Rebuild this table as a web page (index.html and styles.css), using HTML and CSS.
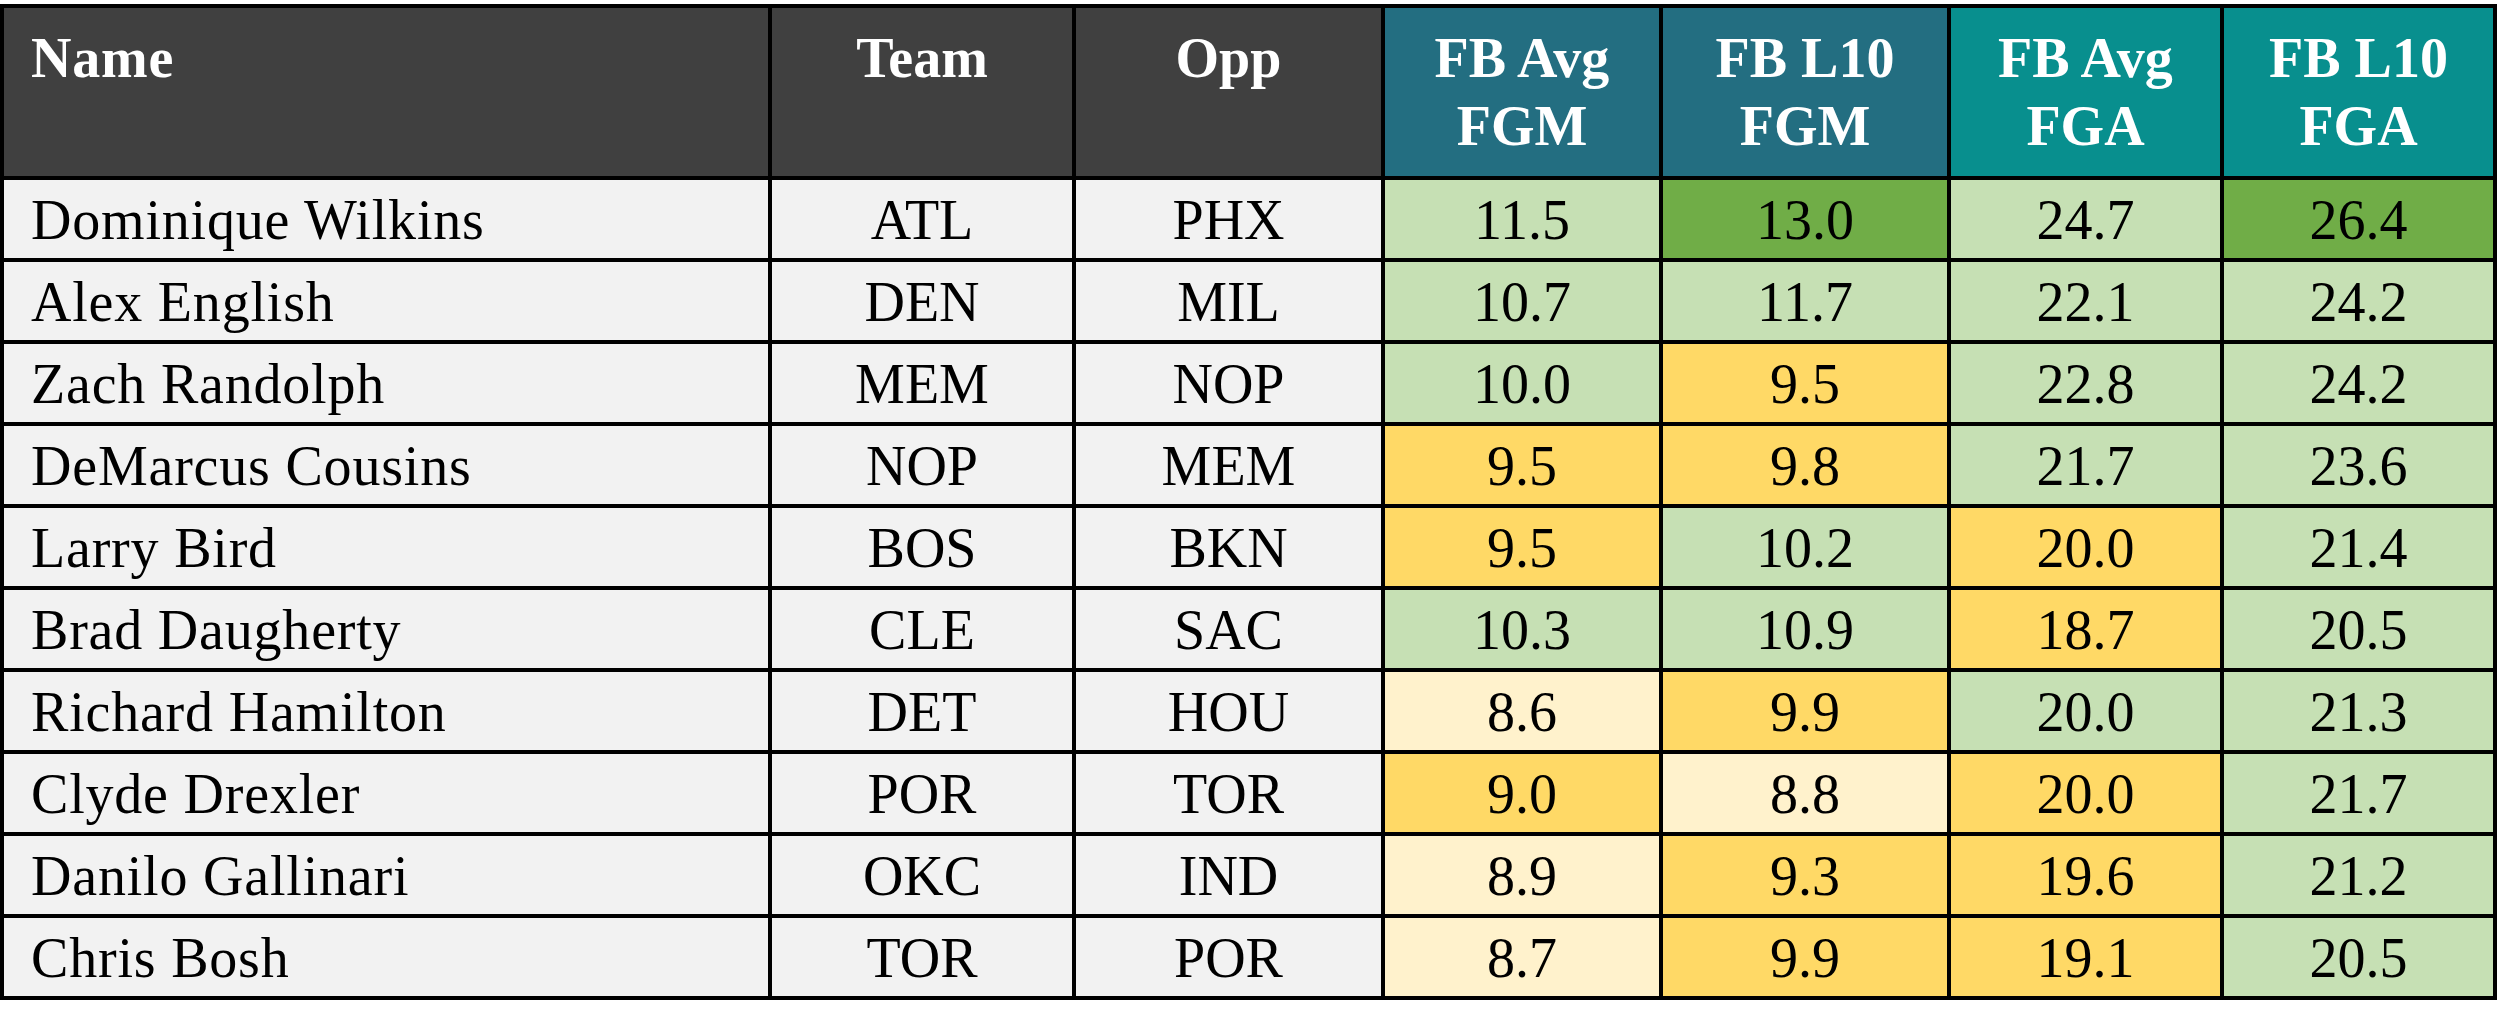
FILE: index.html
```html
<!DOCTYPE html>
<html lang="en">
<head>
<meta charset="utf-8">
<title>FB FGM / FGA</title>
<link rel="stylesheet" href="styles.css">
</head>
<body>
<div class="sheet">
  <div class="row head">
    <div class="cell hd name">Name</div>
    <div class="cell hd mid">Team</div>
    <div class="cell hd mid">Opp</div>
    <div class="cell hd fgm">FB Avg<br>FGM</div>
    <div class="cell hd fgm">FB L10<br>FGM</div>
    <div class="cell hd fga">FB Avg<br>FGA</div>
    <div class="cell hd fga">FB L10<br>FGA</div>
  </div>
  <div class="row">
    <div class="cell txt name">Dominique Wilkins</div><div class="cell txt">ATL</div><div class="cell txt">PHX</div>
    <div class="cell num lg">11.5</div><div class="cell num dg">13.0</div><div class="cell num lg">24.7</div><div class="cell num dg">26.4</div>
  </div>
  <div class="row">
    <div class="cell txt name">Alex English</div><div class="cell txt">DEN</div><div class="cell txt">MIL</div>
    <div class="cell num lg">10.7</div><div class="cell num lg">11.7</div><div class="cell num lg">22.1</div><div class="cell num lg">24.2</div>
  </div>
  <div class="row">
    <div class="cell txt name">Zach Randolph</div><div class="cell txt">MEM</div><div class="cell txt">NOP</div>
    <div class="cell num lg">10.0</div><div class="cell num yl">9.5</div><div class="cell num lg">22.8</div><div class="cell num lg">24.2</div>
  </div>
  <div class="row">
    <div class="cell txt name">DeMarcus Cousins</div><div class="cell txt">NOP</div><div class="cell txt">MEM</div>
    <div class="cell num yl">9.5</div><div class="cell num yl">9.8</div><div class="cell num lg">21.7</div><div class="cell num lg">23.6</div>
  </div>
  <div class="row">
    <div class="cell txt name">Larry Bird</div><div class="cell txt">BOS</div><div class="cell txt">BKN</div>
    <div class="cell num yl">9.5</div><div class="cell num lg">10.2</div><div class="cell num yl">20.0</div><div class="cell num lg">21.4</div>
  </div>
  <div class="row">
    <div class="cell txt name">Brad Daugherty</div><div class="cell txt">CLE</div><div class="cell txt">SAC</div>
    <div class="cell num lg">10.3</div><div class="cell num lg">10.9</div><div class="cell num yl">18.7</div><div class="cell num lg">20.5</div>
  </div>
  <div class="row">
    <div class="cell txt name">Richard Hamilton</div><div class="cell txt">DET</div><div class="cell txt">HOU</div>
    <div class="cell num ly">8.6</div><div class="cell num yl">9.9</div><div class="cell num lg">20.0</div><div class="cell num lg">21.3</div>
  </div>
  <div class="row">
    <div class="cell txt name">Clyde Drexler</div><div class="cell txt">POR</div><div class="cell txt">TOR</div>
    <div class="cell num yl">9.0</div><div class="cell num ly">8.8</div><div class="cell num yl">20.0</div><div class="cell num lg">21.7</div>
  </div>
  <div class="row">
    <div class="cell txt name">Danilo Gallinari</div><div class="cell txt">OKC</div><div class="cell txt">IND</div>
    <div class="cell num ly">8.9</div><div class="cell num yl">9.3</div><div class="cell num yl">19.6</div><div class="cell num lg">21.2</div>
  </div>
  <div class="row">
    <div class="cell txt name">Chris Bosh</div><div class="cell txt">TOR</div><div class="cell txt">POR</div>
    <div class="cell num ly">8.7</div><div class="cell num yl">9.9</div><div class="cell num yl">19.1</div><div class="cell num lg">20.5</div>
  </div>
</div>
</body>
</html>
```

FILE: styles.css
```css
html, body {
  margin: 0;
  padding: 0;
  background: #ffffff;
}

body {
  font-family: "Liberation Serif", "Times New Roman", serif;
  color: #000;
}

.sheet {
  margin-top: 4px;
  width: 2497px;
  box-sizing: border-box;
  display: grid;
  grid-template-columns: 764px 300px 305px 274px 284px 269px 269px;
  grid-template-rows: 168px repeat(10, 78px);
  gap: 4px;
  padding: 4px;
  background: #000;
}

.row {
  display: contents;
}

.cell {
  font-size: 56px;
  display: flex;
  align-items: center;
  justify-content: center;
  text-align: center;
  white-space: nowrap;
}

.cell.name {
  justify-content: flex-start;
  text-align: left;
  padding-left: 27px;
  letter-spacing: 0.8px;
}

.hd {
  align-items: flex-start;
  padding-top: 16px;
  box-sizing: border-box;
  line-height: 68px;
  font-weight: bold;
  color: #ffffff;
  background: #404040;
}

.hd.fgm {
  background: #236e81;
}

.hd.fga {
  background: #088f8e;
}

.txt {
  background: #f2f2f2;
  line-height: 64px;
  padding-top: 2px;
  box-sizing: border-box;
}

.num {
  line-height: 64px;
  padding-top: 2px;
  box-sizing: border-box;
}

.lg { background: #c6e0b4; }
.dg { background: #70ad47; }
.yl { background: #ffd966; }
.ly { background: #fff2cc; }
```
